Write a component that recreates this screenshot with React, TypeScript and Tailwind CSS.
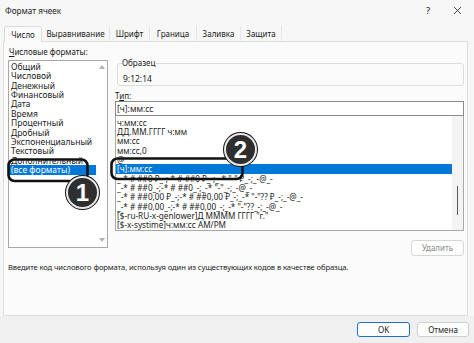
import React from "react";

const leftItems = [
  "Общий",
  "Числовой",
  "Денежный",
  "Финансовый",
  "Дата",
  "Время",
  "Процентный",
  "Дробный",
  "Экспоненциальный",
  "Текстовый",
  "Дополнительный",
];

const rightItems = [
  "ч:мм:сс",
  "ДД.ММ.ГГГГ ч:мм",
  "мм:сс",
  "мм:сс,0",
  "@",
];

const rightItems2 = [
  '_-* # ##0 ₽_-;-* # ##0 ₽_-;_-* "-" ₽_-;_-@_-',
  '_-* # ##0_-;-* # ##0_-;_-* "-"_-;_-@_-',
  '_-* # ##0,00 ₽_-;-* # ##0,00 ₽_-;_-* "-"?? ₽_-;_-@_-',
  '_-* # ##0,00_-;-* # ##0,00_-;_-* "-"??_-;_-@_-',
  '[$-ru-RU-x-genlower]Д ММММ ГГГГ "г."',
  "[$-x-systime]ч:мм:сс AM/PM",
];

const tabs = [
  { t: "Число", w: "w-[38px]" },
  { t: "Выравнивание", w: "w-[68px]" },
  { t: "Шрифт", w: "w-[40px]" },
  { t: "Граница", w: "w-[47px]" },
  { t: "Заливка", w: "w-[44px]" },
  { t: "Защита", w: "w-[41px]" },
];

export default function App() {
  return (
    <div className="relative w-[474px] h-[343px] overflow-hidden bg-[#f7f7f7] font-['Noto_Sans',sans-serif] text-[#1b1b1b] text-[8.5px] leading-[10px]">
      {/* Title bar */}
      <div className="h-[26px] flex items-center pl-[5px] pr-[12px]">
        <div className="text-[8.2px] flex-1 pb-[5px]">Формат ячеек</div>
        <div className="text-[9.5px] pb-[5px] mr-[23px]">?</div>
        <svg width="9" height="9" viewBox="0 0 9 9" className="mb-[5px]">
          <path d="M1 1L8 8M8 1L1 8" stroke="#333" strokeWidth="0.9" />
        </svg>
      </div>
      {/* Tabs */}
      <div className="h-[15px] flex pl-[4px] relative z-10 text-[8px]">
        {tabs.map((tab, i) => (
          <div
            key={tab.t}
            className={
              i === 0
                ? `${tab.w} h-[16px] bg-[#fbfbfb] border border-b-0 border-[#dadada] rounded-t-[2px] flex items-center justify-center`
                : `${tab.w} h-[15px] border-r border-[#e6e6e6] flex items-center justify-center`
            }
          >
            {tab.t}
          </div>
        ))}
      </div>
      {/* Panel */}
      <div className="mx-[3px] w-[465px] h-[275px] bg-[#fbfbfb] border border-[#dedede] flex flex-col pt-[5px]">
        <div className="flex">
          {/* Left column */}
          <div className="ml-[4px] w-[100px] flex flex-col">
            <div className="h-[11px] pl-[1px] text-[8px]">
              <span className="underline decoration-[0.5px] underline-offset-1">Ч</span>исловые форматы:
            </div>
            <div className="mt-[2px] h-[188px] bg-white border border-[#a8a8a8] flex">
              <div className="flex-1 pt-[1px] flex flex-col">
                {leftItems.map((it) => (
                  <div key={it} className="h-[9.36px] leading-[9.36px] pl-[2px] whitespace-nowrap">
                    {it}
                  </div>
                ))}
                <div className="h-[10px] leading-[10px] pl-[2px] bg-[#0078d7] text-white whitespace-nowrap">
                  (все форматы)
                </div>
              </div>
              <div className="w-[11px] flex flex-col items-center justify-between pt-[4px] pb-[5px]">
                <svg width="6" height="4" viewBox="0 0 6 4">
                  <path d="M0 4L3 0L6 4Z" fill="#b0b0b0" />
                </svg>
                <svg width="6" height="4" viewBox="0 0 6 4">
                  <path d="M0 0L3 4L6 0Z" fill="#b0b0b0" />
                </svg>
              </div>
            </div>
          </div>
          {/* Right column */}
          <div className="ml-[7px] w-[349px] flex flex-col">
            <fieldset className="mt-[11px] ml-[2px] h-[28px] border border-[#dcdcdc] rounded-[3px] px-[4px]">
              <legend className="px-0 leading-[10px] text-[8px]">Образец</legend>
              <div className="pt-[6px] pl-[1px] leading-[10px]">9:12:14</div>
            </fieldset>
            <div className="mt-[5px] h-[10px] leading-[10px] text-[8px]">
              Т<span className="underline decoration-[0.5px] underline-offset-1">и</span>п:
            </div>
            <div className="h-[15px] bg-white border border-[#8a8a8a] flex items-center pl-[1px]">
              [ч]:мм:сс
            </div>
            <div className="h-[115px] bg-white border border-[#a8a8a8] border-t-0 flex">
              <div className="flex-1 pt-[2px] flex flex-col overflow-hidden text-[8.2px]">
                {rightItems.map((it) => (
                  <div key={it} className="h-[9.2px] leading-[9.2px] pl-[1px] whitespace-nowrap">
                    {it}
                  </div>
                ))}
                <div className="h-[10px] leading-[10px] pl-[1px] bg-[#0078d7] text-white whitespace-nowrap">
                  [ч]:мм:сс
                </div>
                {rightItems2.map((it) => (
                  <div key={it} className="h-[9.2px] leading-[9.2px] pl-[1px] whitespace-nowrap">
                    {it}
                  </div>
                ))}
              </div>
              <div className="w-[11px] bg-[#f3f3f3] flex flex-col items-center pt-[70px]">
                <div className="w-[1px] h-[29px] bg-[#5a5a5a]" />
              </div>
            </div>
            <div className="mt-[9px] flex justify-end">
              <div className="w-[53px] h-[16px] bg-[#fdfdfd] border border-[#d6d6d6] rounded-[3px] flex items-center justify-center text-[#8a8a8a] text-[8px]">
                Удалить
              </div>
            </div>
          </div>
        </div>
        <div className="mt-[6px] ml-[4px] h-[10px] leading-[10px] whitespace-nowrap text-[7.6px] tracking-[-0.1px]">
          Введите код числового формата, используя один из существующих кодов в качестве образца.
        </div>
      </div>
      {/* Footer */}
      <div className="h-[27px] bg-[#f0f0f0] flex justify-end items-start pt-[6px] pr-[5px] gap-[7px] text-[8px]">
        <div className="w-[53px] h-[15px] bg-[#fdfdfd] border border-[#1a73c8] rounded-[3px] flex items-center justify-center">
          OK
        </div>
        <div className="w-[52px] h-[15px] bg-[#fdfdfd] border border-[#cfcfcf] rounded-[3px] flex items-center justify-center">
          Отмена
        </div>
      </div>

      {/* Annotations */}
      <svg className="absolute inset-0 pointer-events-none" width="474" height="343">
        <rect x="8.5" y="159.5" width="79" height="21.5" rx="6" fill="none" stroke="#111" strokeWidth="2.6" />
        <rect x="111.5" y="158.5" width="131" height="20.5" rx="6" fill="none" stroke="#111" strokeWidth="2.6" />
      </svg>
      <div className="absolute left-[66px] top-[176px] w-[33px] h-[33px] rounded-full bg-[#2f2f2f] border-2 border-[#e9e9e9] ring-1 ring-[#111] flex items-center justify-center text-white font-['Liberation_Sans',sans-serif] font-bold text-[24px] leading-none">
        1
      </div>
      <div className="absolute left-[224px] top-[133px] w-[33px] h-[33px] rounded-full bg-[#2f2f2f] border-2 border-[#e9e9e9] ring-1 ring-[#111] flex items-center justify-center text-white font-['Liberation_Sans',sans-serif] font-bold text-[24px] leading-none">
        2
      </div>
    </div>
  );
}
